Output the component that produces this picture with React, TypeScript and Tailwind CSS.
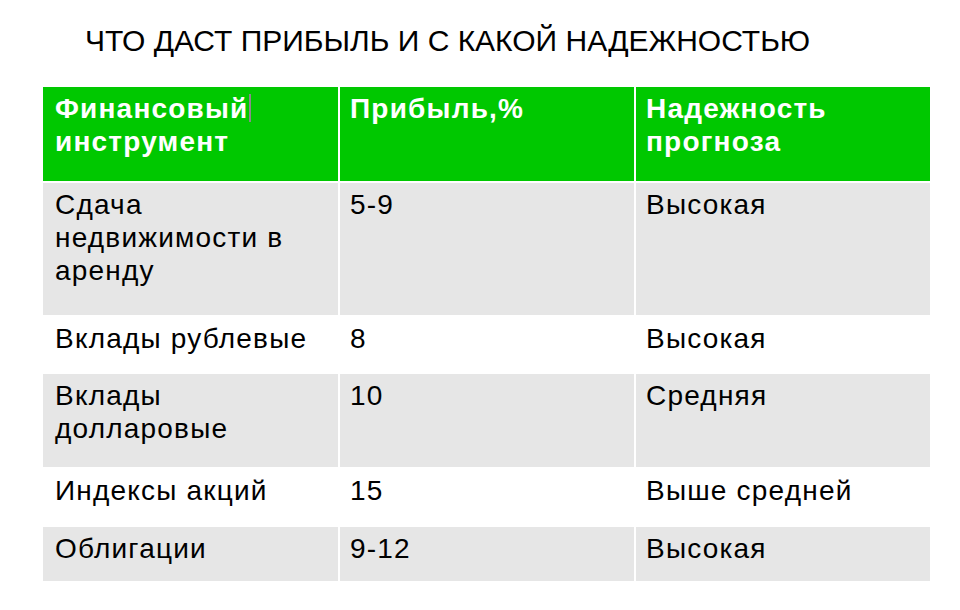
import React from 'react'

const rows = [
  { name: 'Сдача недвижимости в аренду', profit: '5-9', trust: 'Высокая', h: 'h-[132px]', bg: 'bg-[#e6e6e6]', nameW: 'w-[250px]' },
  { name: 'Вклады рублевые', profit: '8', trust: 'Высокая', h: 'h-[55px]', bg: 'bg-white', nameW: '' },
  { name: 'Вклады долларовые', profit: '10', trust: 'Средняя', h: 'h-[93px]', bg: 'bg-[#e6e6e6]', nameW: 'w-[200px]' },
  { name: 'Индексы акций', profit: '15', trust: 'Выше средней', h: 'h-[56px]', bg: 'bg-white', nameW: '' },
  { name: 'Облигации', profit: '9-12', trust: 'Высокая', h: 'h-[54px]', bg: 'bg-[#e6e6e6]', nameW: '' },
]

export default function App() {
  return (
    <div className="w-[960px] h-[610px] bg-white pl-[43px] pt-[24px] font-['Liberation_Sans',Arial,sans-serif] text-black">
      <h1 className="pl-[42px] text-[30px] leading-[34px] font-normal">ЧТО ДАСТ ПРИБЫЛЬ И С КАКОЙ НАДЕЖНОСТЬЮ</h1>

      <div className="mt-[29px] grid grid-cols-[295px_294px_294px] gap-[2px] w-[887px] text-[28px] leading-[33px] tracking-[1.2px]">
        <div className="h-[94px] bg-[#00c800] pl-[12px] pt-[5px] text-white font-bold">
          Финансовый<span className="inline-block w-[2px] h-[28px] bg-[#8a8a8a] align-[-4px]"></span>
          <br />
          инструмент
        </div>
        <div className="h-[94px] bg-[#00c800] pl-[10px] pt-[5px] text-white font-bold">
          Прибыль,%
        </div>
        <div className="h-[94px] bg-[#00c800] pl-[10px] pt-[5px] text-white font-bold">
          Надежность
          <br />
          прогноза
        </div>

        {rows.map((r) => (
          <React.Fragment key={r.name}>
            <div className={`${r.h} ${r.bg} pl-[12px] pt-[5px]`}>
              <div className={r.nameW}>{r.name}</div>
            </div>
            <div className={`${r.h} ${r.bg} pl-[10px] pt-[5px]`}>{r.profit}</div>
            <div className={`${r.h} ${r.bg} pl-[10px] pt-[5px]`}>{r.trust}</div>
          </React.Fragment>
        ))}
      </div>
    </div>
  )
}
